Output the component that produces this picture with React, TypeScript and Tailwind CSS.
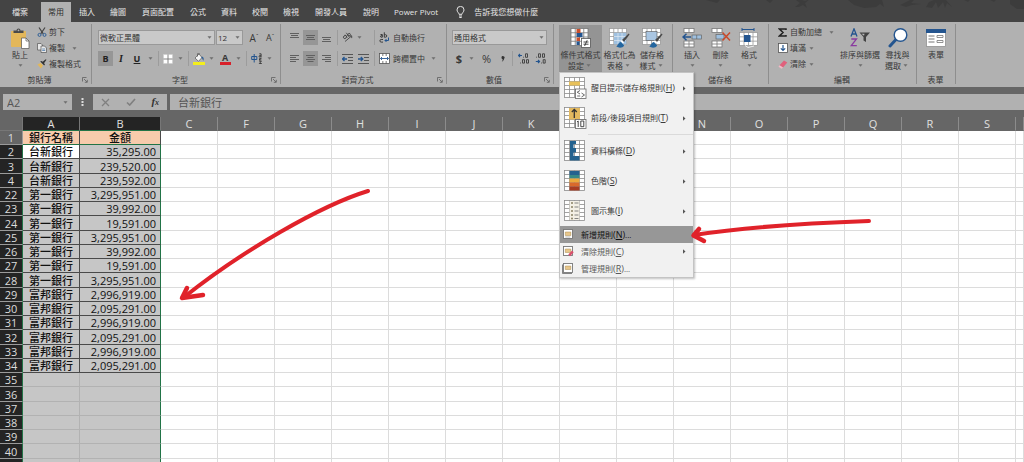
import React from "react";

type Kids = { children?: React.ReactNode };

/* ---------- small building blocks ---------- */

function Caret({ className = "w-[11px]" }: { className?: string }) {
  return (
    <span className={`flex shrink-0 items-center justify-center ${className}`}>
      <svg width="5" height="3" viewBox="0 0 5 3" aria-hidden="true">
        <path d="M.5.3h4L2.500 2.700z" fill="#6e6e6e" />
      </svg>
    </span>
  );
}

function Divider() {
  return (
    <span className="flex h-[15px] w-[5px] shrink-0 justify-center">
      <span className="w-px bg-[#9c9c9c]" />
    </span>
  );
}

function Group({
  label,
  width,
  launcher = false,
  children,
}: Kids & { label?: string; width: string; launcher?: boolean }) {
  return (
    <section aria-label={label} className={`flex h-[60px] shrink-0 flex-col border-r border-[#8e8e8e] ${width}`}>
      <div className="flex h-[52px]">{children}</div>
      <div className="flex h-2 items-center pr-px">
        {label && <span className="flex-1 text-center">{label}</span>}
        {launcher && (
          <button aria-label={`${label}設定`} className="flex w-[11px] justify-center">
            <svg width="6" height="6" viewBox="0 0 6 6" fill="none" stroke="#606060" strokeWidth=".8">
              <path d="M.5 4.500V.5h4M2 2l3 3M5.300 2.800v2.500H2.800" />
            </svg>
          </button>
        )}
      </div>
    </section>
  );
}

function IconButton({
  label,
  width,
  active = false,
  children,
}: Kids & { label: string; width: string; active?: boolean }) {
  return (
    <button
      aria-label={label}
      className={`flex h-[15px] shrink-0 items-center justify-center ${width} ${active ? "bg-[#969696]" : ""}`}
    >
      {children}
    </button>
  );
}

function BigButton({
  icon,
  lines,
  width,
  caret = true,
  active = false,
}: {
  icon: React.ReactNode;
  lines: string[];
  width: string;
  caret?: boolean;
  active?: boolean;
}) {
  return (
    <button
      className={`mt-px flex h-[47px] shrink-0 flex-col items-center pt-[3px] leading-[11px] whitespace-nowrap ${width} ${
        active ? "bg-[#949494]" : ""
      }`}
    >
      <span className="mb-px flex h-5 items-center">{icon}</span>
      <span>{lines[0]}</span>
      <span className="flex h-[11px] items-center">
        {lines[1]}
        {caret && <Caret className="w-[9px]" />}
      </span>
    </button>
  );
}

function SmallRow({ icon, text, caret, gap = "ml-0" }: { icon: React.ReactNode; text: string; caret?: boolean; gap?: string }) {
  return (
    <button className="flex h-4 items-center whitespace-nowrap">
      <span className="mr-[2px] flex w-[11px] justify-center">{icon}</span>
      {text}
      {caret && <Caret className={`w-[11px] ${gap}`} />}
    </button>
  );
}

/* ---------- icons ---------- */

function Sheet({ x = 0, y = 0, w, h, cols, rows, line = "#777" }: {
  x?: number; y?: number; w: number; h: number; cols: number; rows: number; line?: string;
}) {
  const cw = w / cols;
  const rh = h / rows;
  return (
    <g stroke={line} strokeWidth=".8">
      <rect x={x} y={y} width={w} height={h} fill="#fff" />
      {Array.from({ length: cols - 1 }, (_, i) => (
        <path key={`c${i}`} d={`M${x + cw * (i + 1)} ${y}v${h}`} />
      ))}
      {Array.from({ length: rows - 1 }, (_, i) => (
        <path key={`r${i}`} d={`M${x} ${y + rh * (i + 1)}h${w}`} />
      ))}
    </g>
  );
}

const PasteIcon = (
  <svg width="20" height="21" viewBox="0 0 20 21">
    <rect x="1" y="3" width="15" height="16" rx=".8" fill="#e3b75a" />
    <path d="M3.500 5V2.500h3a2 2 0 0 1 4 0h3V5z" fill="#4a4a4a" />
    <circle cx="8.500" cy="2.300" r=".9" fill="#b0b0b0" />
    <path d="M11.500 10h4.500l3 3v7.500h-7.500z" fill="#fff" stroke="#555" strokeWidth=".7" />
    <path d="M16 10v3h3" fill="none" stroke="#555" strokeWidth=".7" />
  </svg>
);

const CutIcon = (
  <svg width="10" height="10" viewBox="0 0 10 10" fill="none">
    <path d="M2 .5l4.300 6.300M8 .5L3.700 6.800" stroke="#444" strokeWidth="1.200" />
    <circle cx="2.500" cy="7.900" r="1.500" stroke="#2f5f96" />
    <circle cx="7.500" cy="7.900" r="1.500" stroke="#2f5f96" />
  </svg>
);

const CopyIcon = (
  <svg width="10" height="10" viewBox="0 0 10 10" fill="#e8e8e8" stroke="#555" strokeWidth=".7">
    <path d="M.5.500h3.500l1.500 1.500v5h-5z" />
    <path d="M4 3h3.500l2 2v4.500H4z" />
    <path d="M5.200 6h3M5.200 7.500h3" stroke="#3b6ea5" />
  </svg>
);

const PainterIcon = (
  <svg width="10" height="10" viewBox="0 0 10 10">
    <path d="M.5 5.500l3-1.500 2.500 2.500-2 3z" fill="#e3b75a" />
    <path d="M3.200 2.500l4 4 .8-1.300-1-1L9.500.8 8.700.2 5.700 2.800l-1.200-.9z" fill="#333" />
  </svg>
);

const BordersIcon = (
  <svg width="10" height="10" viewBox="0 0 10 10">
    <rect x=".5" y=".5" width="9" height="9" fill="#fff" />
    <path d="M5 0v10M0 5h10" stroke="#777" strokeWidth=".9" />
    <rect x=".5" y=".5" width="9" height="9" fill="none" stroke="#ccc" strokeWidth=".5" />
  </svg>
);

const FillIcon = (
  <svg width="12" height="12" viewBox="0 0 12 12">
    <path d="M6 1L2 5l3.500 3.300L9 4.500z" fill="#f4f4f4" stroke="#555" strokeWidth=".7" />
    <path d="M4.500 3.500V1.200a1 1 0 0 1 2 0" fill="none" stroke="#555" strokeWidth=".8" />
    <path d="M9 3.500c2 .5 2 2.500 1.300 4.200C9.300 6.500 9.500 5 8 4.500z" fill="#2f5f96" />
    <rect x="0" y="9" width="12" height="3" fill="#f3ee1c" />
  </svg>
);

const OrientationIcon = (
  <svg width="11" height="11" viewBox="0 0 11 11" fill="none" stroke="#444" strokeWidth=".9">
    <ellipse cx="3" cy="5" rx="1.700" ry="1.400" transform="rotate(-45 3 5)" />
    <path d="M3.200 2.800L5.200 5.500M4.300.8l2.500 3.400" />
    <ellipse cx="7" cy="2.800" rx="1.500" ry="1.200" transform="rotate(-45 7 2.800)" />
    <path d="M3 9.500L9.500 4M7.500 3.900h2.200v2.200" />
  </svg>
);

function LinesIcon({ d }: { d: string }) {
  return (
    <svg width="11" height="11" viewBox="0 0 11 11" stroke="#606060" strokeWidth="1" fill="none">
      <path d={d} />
    </svg>
  );
}

function IndentIcon({ flip = false }: { flip?: boolean }) {
  return (
    <svg width="11" height="10" viewBox="0 0 11 10" fill="none">
      <path d="M0 .5h11M6 3.500h5M6 6.500h5M0 9.500h11" stroke="#555" />
      <path d={flip ? "M0 5h4.500M2.800 3l2 2-2 2" : "M5 5H.7M2.500 3l-2 2 2 2"} stroke="#24558f" strokeWidth="1.300" />
    </svg>
  );
}

const WrapIcon = (
  <svg width="11" height="11" viewBox="0 0 11 11" fill="none" stroke="#3c3c3c" strokeWidth="1">
    <path d="M1.500 2.500h1.800v2.700H2a.8.800 0 0 1 0-1.500h1.300M5.300.3v4.900h1.200a1.200 1.200 0 0 0 0-2.500H5.300M4 7.500H2.200a1.300 1.300 0 0 0 0 2.600H4" />
    <path d="M9.500 5.500v3H6M7.500 7L6 8.500 7.500 10" stroke="#24558f" />
  </svg>
);

const MergeIcon = (
  <svg width="11" height="11" viewBox="0 0 11 11">
    <Sheet x={0.5} y={0.5} w={10} h={10} cols={3} rows={3} line="#555" />
    <rect x="1" y="3" width="9" height="5" fill="#fff" />
    <path d="M1.500 5.500h8M3 4L1.500 5.500 3 7M8 4l1.500 1.500L8 7" fill="none" stroke="#24558f" strokeWidth=".9" />
  </svg>
);

const PhoneticIcon = (
  <svg width="12" height="11" viewBox="0 0 12 11" fill="none">
    <path d="M.7 3.500h5.100v3H.7zM3.200 1v8.500" stroke="#24558f" strokeWidth="1" />
    <path d="M8.300.8h1.800v3M8 3.300c0-1 2-.8 2-.8M8 3.300c.2 1 2 .6 2-.3M8 5.200h2.400L8 7h2.400M8.300 8.300h2L8.300 10.500h2.500" stroke="#333" strokeWidth=".9" />
  </svg>
);

function DecimalIcon({ more = false }: { more?: boolean }) {
  return (
    <svg width="12" height="11" viewBox="0 0 12 11" fill="none" stroke="#3c3c3c" strokeWidth=".9">
      <path d={more ? "M4 2.500H.5M2 1L.5 2.500 2 4" : "M.8 8.500h3.500M3 7l1.500 1.500L3 10"} stroke="#24558f" strokeWidth="1.200" />
      {more ? (
        <path d="M5.200 4.200h.8M7.500.8h2v3.500h-2zM2.200 10h.8M4.500 6.700h2v3.400h-2zM8.500 6.700h2v3.400h-2z" />
      ) : (
        <path d="M1.200 4.200H2M3.500.8h2v3.500h-2zM7.500.8h2v3.500h-2zM6 10h.8M8.200 6.700h2v3.400h-2z" />
      )}
    </svg>
  );
}

const ConditionalIcon = (
  <svg width="21" height="20" viewBox="0 0 21 20">
    <Sheet x={1} y={0.5} w={17} h={17} cols={4} rows={4} />
    <rect x="6.500" y="1" width="4" height="4" fill="#c8502e" />
    <rect x="6.500" y="5" width="6" height="4" fill="#24558f" />
    <rect x="6.500" y="9.500" width="3.500" height="3.500" fill="#c8502e" />
    <rect x="6.500" y="13.500" width="3" height="3.500" fill="#24558f" />
    <rect x="11.500" y="10.500" width="9" height="9" fill="#fff" stroke="#555" strokeWidth=".8" />
    <path d="M13.500 14h5M13.500 16.200h5M17.200 12.200l-2.600 5.800" stroke="#333" strokeWidth=".9" />
  </svg>
);

const Brush = (
  <g>
    <path d="M19.700 5.500L13 12l2 2 5.500-7.500z" fill="#4a4a4a" />
    <path d="M13 12.200l2 2-1 1.200-2.200-2z" fill="#fff" />
    <path d="M12 14c-3 .5-2.500 3-4.800 4.600 3 1.700 6.500 1.400 8-1.100z" fill="#24669f" />
  </g>
);

const TableFormatIcon = (
  <svg width="21" height="20" viewBox="0 0 21 20">
    <Sheet x={0.5} y={0.5} w={17} h={16} cols={4} rows={4} line="#999" />
    <rect x="5" y="4.800" width="12.300" height="11.500" fill="#9fc0df" />
    <path d="M9 5v11M13 5v11M5 8.500h12M5 12.500h12" stroke="#dfeaf4" strokeWidth=".7" />
    {Brush}
  </svg>
);

const CellStyleIcon = (
  <svg width="21" height="20" viewBox="0 0 21 20">
    <Sheet x={0.5} y={0.5} w={18} h={16} cols={4} rows={4} line="#999" />
    <rect x="4" y="3.500" width="11" height="9" fill="#aac6e2" stroke="#555" strokeWidth=".6" />
    {Brush}
  </svg>
);

const InsertIcon = (
  <svg width="20" height="20" viewBox="0 0 20 20">
    <Sheet x={2} y={0.5} w={10} h={4} cols={2} rows={1} />
    <Sheet x={2} y={13} w={10} h={6} cols={2} rows={2} />
    <rect x="10" y="7" width="9.500" height="4" fill="#9fc0df" stroke="#666" strokeWidth=".7" />
    <path d="M14.700 7v4" stroke="#666" strokeWidth=".7" />
    <path d="M9 9H1M4.500 5.700L1 9l3.500 3.300" fill="none" stroke="#24558f" strokeWidth="1.500" />
  </svg>
);

const DeleteIcon = (
  <svg width="20" height="20" viewBox="0 0 20 20">
    <Sheet x={1} y={0.5} w={10} h={4} cols={2} rows={1} />
    <Sheet x={1} y={13} w={10} h={6} cols={2} rows={2} />
    <rect x="5" y="6.500" width="8" height="4.500" fill="#9fc0df" stroke="#666" strokeWidth=".7" />
    <path d="M11.500 4.500l7.500 8M19 4.500l-7.500 8" stroke="#c9492b" strokeWidth="1.500" />
  </svg>
);

const FormatIcon = (
  <svg width="20" height="20" viewBox="0 0 20 20">
    <path d="M3 1.500h12M3 0v3M15 0v3" stroke="#24558f" strokeWidth="1" />
    <Sheet x={0.5} y={4.5} w={18} h={13} cols={4} rows={3} line="#999" />
    <rect x="5" y="7" width="6.500" height="7" fill="#24558f" />
    <path d="M6 17.500l3 2 6-1.500" stroke="#eee" fill="none" />
  </svg>
);

const SigmaIcon = (
  <svg width="9" height="9" viewBox="0 0 9 9" fill="none" stroke="#222" strokeWidth="1.500">
    <path d="M8 2V.9H1.300L5 4.500 1.300 8.100H8V7" />
  </svg>
);

const FillDownIcon = (
  <svg width="10" height="10" viewBox="0 0 10 10">
    <rect x=".5" y=".5" width="9" height="9" fill="#fff" stroke="#555" strokeWidth=".8" />
    <path d="M5 2v5.500M2.800 5.300L5 7.500l2.200-2.200" fill="none" stroke="#24558f" strokeWidth="1.200" />
  </svg>
);

const EraserIcon = (
  <svg width="10" height="9" viewBox="0 0 10 9">
    <path d="M6 .5l3.300 2L5 7.500 1.500 5.300z" fill="#e0607c" />
    <path d="M1.500 5.300L5 7.500 3.700 8.700.5 6.700z" fill="#f4b9c5" />
  </svg>
);

const SortIcon = (
  <svg width="22" height="20" viewBox="0 0 22 20" fill="none">
    <path d="M2 8.500L5 .8l3 7.700M3 6h4" stroke="#24558f" strokeWidth="1.300" />
    <path d="M2.300 11h5.200l-5.200 6.700h5.500" stroke="#8a3ba0" strokeWidth="1.300" />
    <path d="M10.500 4.500H21l-4 4.500v5l-2.500-1.500V9z" fill="#444" />
    <path d="M12.500 5.700h3l-.5 2z" fill="#bbb" />
  </svg>
);

const FindIcon = (
  <svg width="20" height="20" viewBox="0 0 20 20">
    <path d="M8 11.500L2 18" stroke="#24558f" strokeWidth="3" strokeLinecap="round" />
    <circle cx="12.500" cy="7" r="6.300" fill="#fff" stroke="#24558f" strokeWidth="1.400" />
  </svg>
);

const FormIcon = (
  <svg width="20" height="18" viewBox="0 0 20 18">
    <rect x=".5" y=".5" width="19" height="17" fill="#fff" stroke="#888" strokeWidth=".7" />
    <rect width="20" height="4" fill="#24558f" />
    <path d="M2.500 7h6M2.500 10h6M2.500 13h6" stroke="#777" />
    <path d="M11 6.500h6v2h-6zM11 11.500h6v2h-6z" fill="#fff" stroke="#777" strokeWidth=".8" />
  </svg>
);

function MenuSheet({ children }: Kids) {
  return (
    <svg width="23" height="22" viewBox="0 0 23 22">
      <Sheet x={0.5} y={0.5} w={20} h={20} cols={4} rows={5} line="#8c8c8c" />
      {children}
    </svg>
  );
}

const HighlightIcon = (
  <MenuSheet>
    <rect x="5" y="4.500" width="11" height="4" fill="#e8c15a" />
    <rect x="11.500" y="12" width="10.500" height="9.500" fill="#fff" stroke="#666" strokeWidth=".8" />
    <path d="M16 13.500l-2.800 1.700L16 17M13.200 19h3M17.500 16l3 2-3 2" fill="none" stroke="#444" strokeWidth=".8" />
  </MenuSheet>
);

const TopBottomIcon = (
  <MenuSheet>
    <rect x="5" y="1" width="11" height="11.500" fill="#e3b95f" />
    <path d="M10.300 11V2.500M7.800 5l2.500-2.500L12.800 5" fill="none" stroke="#333" strokeWidth="1.300" />
    <rect x="11.500" y="12.500" width="10.500" height="9" fill="#fff" stroke="#666" strokeWidth=".8" />
    <path d="M13 15l1.200-1v6M16.800 14h3v5.700h-3z" fill="none" stroke="#333" strokeWidth=".9" />
  </MenuSheet>
);

const DataBarIcon = (
  <MenuSheet>
    <path d="M6 1h6v3h-2.500v4H12v4.500H9.500v3.500h6v4.500H6z" fill="#24628f" />
  </MenuSheet>
);

const ColorScaleIcon = (
  <MenuSheet>
    <rect x="5.500" y="1" width="10" height="4" fill="#24628f" />
    <rect x="5.500" y="5" width="10" height="3.500" fill="#388a86" />
    <rect x="5.500" y="8.500" width="10" height="4" fill="#eba93c" />
    <rect x="5.500" y="12.500" width="10" height="4" fill="#d9692b" />
    <rect x="5.500" y="16.500" width="10" height="4" fill="#a83c22" />
  </MenuSheet>
);

const IconSetIcon = (
  <MenuSheet>
    <rect x="5.500" y="1" width="10" height="19" fill="#f4f0e4" />
    {[3, 7, 11, 15, 18.500].map((y) => (
      <g key={y}>
        <circle cx="8" cy={y} r="1" fill="#8a8263" />
        <path d={`M10.500 ${y}h4`} stroke="#777" strokeWidth=".9" />
      </g>
    ))}
  </MenuSheet>
);

function RuleIcon({ kind }: { kind: "new" | "clear" | "manage" }) {
  return (
    <svg width="12" height="11" viewBox="0 0 12 11">
      <rect x="1.500" y=".5" width="9" height="9" fill="#fff" stroke="#777" strokeWidth=".9" />
      <path d="M3.300 3h5.500v3.500H3.300z" fill="#e8c68a" stroke="#a98a4d" strokeWidth=".5" />
      {kind === "new" && <path d="M3.300 8h5" stroke="#999" strokeWidth=".7" />}
      {kind === "clear" && <path d="M10 4.500L6.300 8.500 8 10.300l3.700-4z" fill="#d9506c" />}
      {kind === "manage" && <path d="M.5 1.500v9h9.500" fill="none" stroke="#666" strokeWidth=".8" />}
    </svg>
  );
}

/* ---------- conditional formatting menu ---------- */

type Entry = { icon: React.ReactNode; text: string; accel: string; sub?: boolean; dots?: boolean };

const largeEntries: Entry[] = [
  { icon: HighlightIcon, text: "醒目提示儲存格規則", accel: "H" },
  { icon: TopBottomIcon, text: "前段/後段項目規則", accel: "T" },
  { icon: DataBarIcon, text: "資料橫條", accel: "D" },
  { icon: ColorScaleIcon, text: "色階", accel: "S" },
  { icon: IconSetIcon, text: "圖示集", accel: "I" },
];

const smallEntries: Entry[] = [
  { icon: <RuleIcon kind="new" />, text: "新增規則", accel: "N", dots: true },
  { icon: <RuleIcon kind="clear" />, text: "清除規則", accel: "C", sub: true },
  { icon: <RuleIcon kind="manage" />, text: "管理規則", accel: "R", dots: true },
];

function SubArrow() {
  return (
    <svg className="mr-[7px] ml-auto" width="3" height="5" viewBox="0 0 3 5" aria-hidden="true">
      <path d="M0 .3l2.500 2.200L0 4.700z" fill="#555" />
    </svg>
  );
}

function EntryText({ entry }: { entry: Entry }) {
  return (
    <span>
      {entry.text}
      <span className="text-[9px]">
        (<u>{entry.accel}</u>)
      </span>
      {entry.dots && "..."}
    </span>
  );
}

function ConditionalMenu() {
  return (
    <div
      role="menu"
      className="absolute top-full left-0 z-20 w-[135px] border border-[#c4c4c4] bg-[#f1f1f1] text-[#3a3a3a] shadow-[1px_1px_2px_rgba(0,0,0,0.25)]"
    >
      {largeEntries.map((e, i) => (
        <React.Fragment key={e.accel}>
          {i === 2 && <div className="my-px ml-7 h-px bg-[#dadada]" />}
          <button role="menuitem" className="flex h-[30px] w-full items-center pl-1 whitespace-nowrap">
            <span className="mr-1 shrink-0">{e.icon}</span>
            <EntryText entry={e} />
            <SubArrow />
          </button>
        </React.Fragment>
      ))}
      {smallEntries.map((e) => (
        <button
          key={e.accel}
          role="menuitem"
          className={`flex h-[17px] w-full items-center pl-[2px] whitespace-nowrap ${
            e.accel === "N" ? "bg-[#979797] text-[#111]" : "text-[#5a5a5a]"
          }`}
        >
          <span className="mr-[7px] shrink-0">{e.icon}</span>
          <EntryText entry={e} />
          {e.sub && <SubArrow />}
        </button>
      ))}
    </div>
  );
}

/* ---------- ribbon ---------- */

const tabs = ["檔案", "常用", "插入", "繪圖", "頁面配置", "公式", "資料", "校閱", "檢視", "開發人員", "說明", "Power Pivot"];

function TabBar() {
  return (
    <nav className="relative flex h-[22px] items-end gap-px overflow-hidden bg-[#444] pl-[5px] text-[#e6e6e6]">
      <svg className="absolute top-0 right-0" width="340" height="10" viewBox="0 0 340 10" fill="#3c3c3c" aria-hidden="true">
        <path d="M22 0h14l-3 3zM82 0h7l-3 3zM112 0l4 3-5 4h4l4-2 4 3-2-5 5-4-5 2-3-1zM164 0h34l2 7-4-3-4 3-12 1-10-3zM216 5l8-4 2-1h4l-3 3 10 1-9 1-6 2zM242 7l3-5 5-2h12l6 7-5-4-2 5-2-6-5 6-2-6-4 6zM280 0h6l-2 2zM306 0h6l-2 2zM326 0h14v9h-7l-7-5z" />
      </svg>
      {tabs.map((t) => (
        <button
          key={t}
          className={`h-5 shrink-0 px-[7px] whitespace-nowrap ${t === "常用" ? "bg-[#b1b1b1] text-[#2d2d2d]" : ""} ${
            t === "檔案" ? "mr-[5px]" : ""
          } ${t.length === 4 ? "mx-px" : ""}`}
        >
          {t}
        </button>
      ))}
      <button className="relative ml-[10px] flex h-5 items-center gap-[9px] whitespace-nowrap">
        <svg width="9" height="12" viewBox="0 0 9 12" fill="none" stroke="#e6e6e6" strokeWidth="1">
          <path d="M3 8.300C3 6.800 1 6 1 3.900a3.500 3.500 0 0 1 7 0C8 6 6 6.800 6 8.300zM3 10h3M3.300 11.500h2.400" />
        </svg>
        告訴我您想做什麼
      </button>
    </nav>
  );
}

function SelectBox({ label, value, width }: { label: string; value: string; width: string }) {
  return (
    <label className={`flex h-[15px] shrink-0 items-center border border-[#999] bg-[#c9c9c9] ${width}`}>
      <select aria-label={label} className="min-w-0 flex-1 appearance-none bg-transparent pl-px text-[#333]" defaultValue={value}>
        <option>{value}</option>
      </select>
      <Caret className="w-[9px]" />
    </label>
  );
}

function Ribbon() {
  return (
    <div className="flex h-[65px] bg-[#b1b1b1] pt-[2px] text-[#383838]">
      <Group label="剪貼簿" width="w-[92px]" launcher>
        <div className="flex pl-1">
          <BigButton icon={PasteIcon} lines={["貼上"]} width="w-8" />
          <div className="flex flex-col items-start">
            <SmallRow icon={CutIcon} text="剪下" />
            <SmallRow icon={CopyIcon} text="複製" caret gap="ml-1" />
            <SmallRow icon={PainterIcon} text="複製格式" />
          </div>
        </div>
      </Group>

      <Group label="字型" width="w-[189px]" launcher>
        <div className="flex flex-col gap-[6px] pt-[6px] pl-[6px]">
          <div className="flex">
            <SelectBox label="字型" value="微軟正黑體" width="w-[117px]" />
            <span className="w-px" />
            <SelectBox label="字型大小" value="12" width="w-[27px]" />
            <span className="w-1" />
            <IconButton label="放大字型" width="w-[14px]">
              <span className="text-[10px]">A</span>
              <span className="pb-1 text-[6px]">ˆ</span>
            </IconButton>
            <IconButton label="縮小字型" width="w-[18px]">
              <span className="text-[9px]">A</span>
              <span className="pb-1 text-[6px]">ˇ</span>
            </IconButton>
          </div>
          <div className="flex">
            <IconButton label="粗體" width="w-[15px]" active>
              <b className="text-[9px] text-[#222]">B</b>
            </IconButton>
            <IconButton label="斜體" width="w-4">
              <b className="font-['Liberation_Serif',serif] text-[10px] text-[#222] italic">I</b>
            </IconButton>
            <IconButton label="底線" width="w-4">
              <b className="text-[9px] text-[#222] underline">U</b>
            </IconButton>
            <Caret />
            <Divider />
            <IconButton label="框線" width="w-[14px]">{BordersIcon}</IconButton>
            <Caret />
            <Divider />
            <IconButton label="填滿色彩" width="w-[15px]">{FillIcon}</IconButton>
            <Caret />
            <IconButton label="字型色彩" width="w-4">
              <span className="flex w-[11px] justify-center border-b-[3px] border-[#d8202a] text-[9px] leading-[9px] font-bold">A</span>
            </IconButton>
            <Caret />
            <Divider />
            <IconButton label="注音標示" width="w-[15px]">{PhoneticIcon}</IconButton>
            <Caret />
          </div>
        </div>
      </Group>

      <Group label="對齊方式" width="w-[166px]" launcher>
        <div className="flex flex-col gap-[6px] pt-[6px] pl-1">
          <div className="flex">
            <IconButton label="靠上對齊" width="w-[18px]"><LinesIcon d="M1 1.500h9M2 3.500h7M1 5.500h9" /></IconButton>
            <IconButton label="置中對齊" width="w-[15px]" active><LinesIcon d="M1 3.500h9M2 5.500h7M1 7.500h9" /></IconButton>
            <IconButton label="靠下對齊" width="w-[17px]"><LinesIcon d="M1 5.500h9M2 7.500h7M1 9.500h9" /></IconButton>
            <Divider />
            <IconButton label="方向" width="w-[14px]">{OrientationIcon}</IconButton>
            <Caret />
          </div>
          <div className="flex">
            <IconButton label="靠左對齊" width="w-[18px]"><LinesIcon d="M1 2.500h9M1 4.500h6M1 6.500h9M1 8.500h6" /></IconButton>
            <IconButton label="水平置中" width="w-[15px]" active><LinesIcon d="M1 2.500h9M2.500 4.500h6M1 6.500h9M2.500 8.500h6" /></IconButton>
            <IconButton label="靠右對齊" width="w-[17px]"><LinesIcon d="M1 2.500h9M4 4.500h6M1 6.500h9M4 8.500h6" /></IconButton>
            <Divider />
            <IconButton label="減少縮排" width="w-[14px]"><IndentIcon /></IconButton>
            <IconButton label="增加縮排" width="w-[18px]"><IndentIcon flip /></IconButton>
          </div>
        </div>
        <div className="flex flex-col gap-[6px] pt-[6px]">
          <div className="flex h-[15px] items-center whitespace-nowrap">
            <Divider />
            <button className="ml-[2px] flex items-center gap-[3px]">{WrapIcon}自動換行</button>
          </div>
          <div className="flex h-[15px] items-center whitespace-nowrap">
            <Divider />
            <button className="ml-[2px] flex items-center gap-[3px]">
              {MergeIcon}跨欄置中
              <Caret />
            </button>
          </div>
        </div>
      </Group>

      <Group label="數值" width="w-[107px]" launcher>
        <div className="flex flex-col gap-[6px] pt-[6px] pl-[5px]">
          <SelectBox label="數值格式" value="通用格式" width="w-[95px]" />
          <div className="flex">
            <IconButton label="會計數字格式" width="w-[14px]"><b className="text-[11px]">$</b></IconButton>
            <Caret />
            <IconButton label="百分比樣式" width="w-[19px]"><span className="text-[11px]">%</span></IconButton>
            <IconButton label="千分位樣式" width="w-[14px]">
              <svg width="4" height="6" viewBox="0 0 4 6"><path d="M.5 1.500a1.500 1.500 0 1 1 2.700 1C3 4 2 5.300.8 5.700c.6-.9.9-1.600.9-2.500A1.600 1.600 0 0 1 .5 1.500z" fill="#333" /></svg>
            </IconButton>
            <Divider />
            <IconButton label="增加小數位數" width="w-[17px]"><DecimalIcon more /></IconButton>
            <IconButton label="減少小數位數" width="w-[17px]"><DecimalIcon /></IconButton>
          </div>
        </div>
      </Group>

      <Group width="w-[119px]">
        <div className="flex items-start pl-[5px]">
          <div className="relative">
            <BigButton icon={ConditionalIcon} lines={["條件式格式", "設定"]} width="w-[43px]" active />
            <ConditionalMenu />
          </div>
          <BigButton icon={TableFormatIcon} lines={["格式化為", "表格"]} width="w-[35px]" />
          <BigButton icon={CellStyleIcon} lines={["儲存格", "樣式"]} width="w-[30px]" />
        </div>
      </Group>

      <Group label="儲存格" width="w-24">
        <div className="flex items-start pl-[5px]">
          <BigButton icon={InsertIcon} lines={["插入"]} width="w-7" />
          <BigButton icon={DeleteIcon} lines={["刪除"]} width="w-[29px]" />
          <BigButton icon={FormatIcon} lines={["格式"]} width="w-7" />
        </div>
      </Group>

      <Group label="編輯" width="w-[148px]">
        <div className="flex items-start pl-2">
          <div className="flex w-[62px] flex-col items-start">
            <SmallRow icon={SigmaIcon} text="自動加總" caret gap="ml-1" />
            <SmallRow icon={FillDownIcon} text="填滿" caret />
            <SmallRow icon={EraserIcon} text="清除" caret />
          </div>
          <BigButton icon={SortIcon} lines={["排序與篩選"]} width="w-[42px]" />
          <BigButton icon={FindIcon} lines={["尋找與", "選取"]} width="w-[33px]" />
        </div>
      </Group>

      <Group label="表單" width="w-[39px]">
        <BigButton icon={FormIcon} lines={["表單"]} width="w-[38px]" caret={false} />
      </Group>
    </div>
  );
}

function FormulaBar() {
  return (
    <div className="flex h-[30px] items-center bg-[#666] text-[11px] text-[#555]">
      <label className="ml-[3px] flex h-4 w-[69px] items-center bg-[#b1b1b1]">
        <input aria-label="名稱方塊" defaultValue="A2" className="min-w-0 flex-1 bg-transparent pl-1 outline-none" />
        <Caret className="w-[13px]" />
      </label>
      <svg className="mx-2" width="5" height="10" viewBox="0 0 5 10" fill="#ddd" aria-hidden="true">
        <path d="M1.500 1h2v2h-2zM1.500 4h2v2h-2zM1.500 7h2v2h-2z" />
      </svg>
      <div className="flex h-4 w-[74px] items-center justify-around bg-[#b1b1b1]">
        <button aria-label="取消">
          <svg width="9" height="9" viewBox="0 0 9 9" stroke="#808080" strokeWidth="1.300"><path d="M1 1l7 7M8 1L1 8" /></svg>
        </button>
        <button aria-label="輸入">
          <svg width="10" height="8" viewBox="0 0 10 8" fill="none" stroke="#808080" strokeWidth="1.700"><path d="M1 4.500L3.700 7 9 1" /></svg>
        </button>
        <button aria-label="插入函數" className="font-['Liberation_Serif',serif] leading-4 font-bold text-[#333] italic">
          f<span className="text-[8px]">x</span>
        </button>
      </div>
      <input
        aria-label="資料編輯列"
        defaultValue="台新銀行"
        className="ml-[3px] h-4 min-w-0 flex-1 bg-[#b1b1b1] pl-2 outline-none"
      />
    </div>
  );
}

/* ---------- worksheet ---------- */

const otherColumns = ["C", "F", "G", "H", "I", "J", "K", "", "", "N", "O", "P", "Q", "R", "S", ""];

const data: [number, string, string][] = [
  [1, "銀行名稱", "金額"],
  [2, "台新銀行", "35,295.00"],
  [3, "台新銀行", "239,520.00"],
  [4, "台新銀行", "239,592.00"],
  [22, "第一銀行", "3,295,951.00"],
  [23, "第一銀行", "39,992.00"],
  [24, "第一銀行", "19,591.00"],
  [25, "第一銀行", "3,295,951.00"],
  [26, "第一銀行", "39,992.00"],
  [27, "第一銀行", "19,591.00"],
  [28, "第一銀行", "3,295,951.00"],
  [29, "富邦銀行", "2,996,919.00"],
  [30, "富邦銀行", "2,095,291.00"],
  [31, "富邦銀行", "2,996,919.00"],
  [32, "富邦銀行", "2,095,291.00"],
  [33, "富邦銀行", "2,996,919.00"],
  [34, "富邦銀行", "2,095,291.00"],
  [35, "", ""],
  [36, "", ""],
  [37, "", ""],
  [38, "", ""],
  [39, "", ""],
  [40, "", ""],
  [41, "", ""],
];

function cellStyle(row: number, col: "A" | "B") {
  const side = col === "B" && row > 1 ? "border-r-[#217346]" : "";
  if (row === 1) return `bg-[#f7cbac] text-center border-[#4a4a4a] border-b-[#217346] ${side}`;
  const align = col === "A" ? "text-center" : "pr-1 text-right";
  if (row > 34) return `bg-[#c6c6c6] border-[#b2b2b2] ${side}`;
  const fill = row === 2 && col === "A" ? "bg-white" : "bg-[#c6c6c6]";
  return `${fill} ${align} border-[#4a4a4a] ${side}`;
}

function Worksheet() {
  return (
    <table className="w-full table-fixed border-separate border-spacing-0 text-[11px] leading-[13px]">
      <colgroup>
        <col className="w-[23px]" />
        <col className="w-[57px]" />
        <col className="w-[81px]" />
        {otherColumns.map((_, i) => (
          <col key={i} className={i < otherColumns.length - 1 ? "w-[57px]" : ""} />
        ))}
      </colgroup>
      <thead>
        <tr className="h-[14px] bg-[#666] text-[#e0e0e0]">
          <th className="border-r border-b border-[#777] p-0" />
          {["A", "B"].map((c) => (
            <th key={c} className="border-r border-b border-[#777] border-b-[#217346] bg-[#242424] p-0 font-normal">
              {c}
            </th>
          ))}
          {otherColumns.map((c, i) => (
            <th key={i} className="border-r border-b border-[#8c8c8c] border-b-[#666] p-0 font-normal">
              {c}
            </th>
          ))}
        </tr>
      </thead>
      <tbody>
        {data.map(([row, name, amount]) => (
          <tr key={row} className="h-[14px] nth-[4n+3]:h-[15px]">
            <th
              className={`border-r border-b border-[#9a9a9a] p-0 font-normal text-[#dcdcdc] ${
                row === 1 ? "bg-[#666]" : "border-r-[#217346] bg-[#242424]"
              }`}
            >
              {row}
            </th>
            <td className={`border-r border-b p-0 font-medium text-[#111] ${cellStyle(row, "A")}`}>{name}</td>
            <td className={`border-r border-b py-0 pl-0 font-medium text-[#111] ${cellStyle(row, "B")}`}>{amount}</td>
            {otherColumns.map((_, i) => (
              <td key={i} className="border-r border-b border-[#dcdcdc] bg-white p-0" />
            ))}
          </tr>
        ))}
      </tbody>
    </table>
  );
}

/* ---------- hand-drawn arrows ---------- */

function Arrows() {
  return (
    <svg
      className="pointer-events-none absolute top-0 left-0 z-30"
      width="1024"
      height="462"
      viewBox="0 0 1024 462"
      fill="none"
      stroke="#e0222a"
      strokeWidth="4"
      strokeLinecap="round"
      strokeLinejoin="round"
      aria-hidden="true"
    >
      <path d="M368 191C322 205 243 250 183 298" />
      <path d="M187 288L182 298L203 295" strokeWidth="4.500" />
      <path d="M869 221C812 223 739 228 694 235" />
      <path d="M699 229L693.500 235.500L704 241" strokeWidth="4.500" />
    </svg>
  );
}

export default function App() {
  return (
    <main
      lang="zh-Hant"
      className="relative h-screen overflow-hidden bg-white font-['Open_Sans','Noto_Sans_CJK_TC',sans-serif] text-[8px] leading-[10px]"
    >
      <TabBar />
      <Ribbon />
      <FormulaBar />
      <Worksheet />
      <Arrows />
    </main>
  );
}
